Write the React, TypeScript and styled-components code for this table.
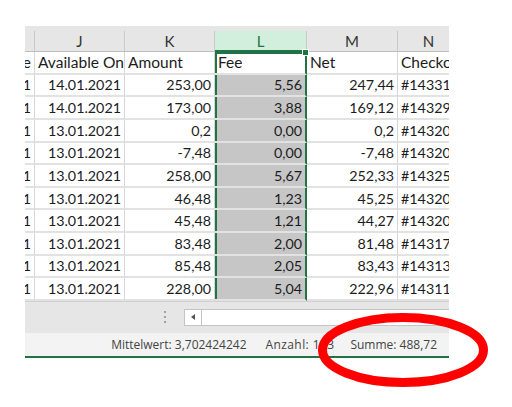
import React from "react";
import styled, { createGlobalStyle, css } from "styled-components";

const GlobalStyle = createGlobalStyle`
  html, body { margin: 0; padding: 0; background: #ffffff; }
  body { font-family: Lato, "Liberation Sans", sans-serif; }
`;

const COLS = "10px 90px 90px 92px 91px 62px";
const GREEN = "#217346";

const Page = styled.div`
  position: relative;
  width: 512px;
  height: 407px;
  padding: 26px 0 0 25px;
  box-sizing: border-box;
  overflow: hidden;
`;

const Sheet = styled.div`
  width: 424px;
  overflow: hidden;
`;

const HeaderRow = styled.div`
  display: grid;
  grid-template-columns: ${COLS};
  background: #e6e6e6;
  padding-top: 5px;
`;

const HeaderCell = styled.div<{ $active?: boolean }>`
  height: 21px;
  box-sizing: border-box;
  border-right: 1px solid #cacaca;
  border-bottom: 1px solid #bdbdbd;
  display: flex;
  align-items: center;
  justify-content: center;
  font-size: 15px;
  color: #333;
  overflow: hidden;
  ${(p) =>
    p.$active &&
    css`
      background: #d2efdd;
      color: ${GREEN};
      border-bottom: 2px solid ${GREEN};
    `}
`;

const Grid = styled.div`
  display: grid;
  grid-template-columns: ${COLS};
  grid-auto-rows: 22.64px;
  background: #fff;
`;

const Cell = styled.div<{ $right?: boolean; $sel?: boolean; $active?: boolean; $title?: boolean }>`
  position: relative;
  box-sizing: border-box;
  border-right: 1px solid #d6d6d6;
  border-bottom: 2px solid #e2e2e2;
  padding: 0 3px;
  display: flex;
  align-items: center;
  justify-content: ${(p) => (p.$right ? "flex-end" : "flex-start")};
  white-space: nowrap;
  overflow: hidden;
  font-size: ${(p) => (p.$title ? "15.5px" : "14.3px")};
  color: #1c1c1c;
  ${(p) =>
    p.$sel &&
    css`
      background: ${p.$active ? "#ffffff" : "#c6c6c6"};
      border-right-color: ${GREEN};
      border-right-width: 2px;
      box-shadow: inset 2px 0 0 ${GREEN} ${p.$active ? `, inset 0 2px 0 ${GREEN}` : ""};
      overflow: visible;
    `}
`;

const Clip = styled.span`
  display: block;
  overflow: hidden;
`;

const Handle = styled.span`
  position: absolute;
  right: -4px;
  top: -3px;
  width: 5px;
  height: 5px;
  background: ${GREEN};
  border: 1px solid #fff;
`;

const ScrollStrip = styled.div`
  height: 32px;
  box-sizing: border-box;
  background: #e6e6e6;
  border-top: 1px solid #d0d0d0;
  display: flex;
  align-items: center;
  padding-left: 139px;
`;

const Dots = styled.div`
  display: flex;
  flex-direction: column;
  gap: 3px;
`;

const Dot = styled.span`
  width: 2px;
  height: 2px;
  background: #a0a0a0;
`;

const ScrollBox = styled.div`
  margin-left: 18px;
  flex: 1;
  height: 17px;
  box-sizing: border-box;
  background: #fff;
  border: 1px solid #c4c4c4;
  border-right: none;
  display: flex;
`;

const ArrowBtn = styled.div`
  width: 16px;
  border-right: 1px solid #c4c4c4;
  display: flex;
  align-items: center;
  justify-content: center;
  &::before {
    content: "";
    border-style: solid;
    border-width: 3.5px 4px 3.5px 0;
    border-color: transparent #555 transparent transparent;
  }
`;

const StatusBar = styled.div`
  height: 25px;
  box-sizing: border-box;
  background: #f3f3f3;
  border-bottom: 2px solid ${GREEN};
  display: flex;
  align-items: center;
  justify-content: flex-end;
  padding-right: 12px;
  font-family: "Open Sans", "Noto Sans", sans-serif;
  font-size: 12px;
  color: #444;
`;

const StatusItem = styled.span<{ $gap: number; $spread?: boolean }>`
  margin-left: ${(p) => p.$gap}px;
  white-space: nowrap;
  letter-spacing: ${(p) => (p.$spread ? "0.4px" : "0")};
`;

const Mark = styled.svg`
  position: absolute;
  left: 0;
  top: 0;
  pointer-events: none;
`;

const letters = ["", "J", "K", "L", "M", "N"];
const titles = ["Date", "Available On", "Amount", "Fee", "Net", "Checkout"];
const rows = [
  ["14.01.2021", "253,00", "5,56", "247,44", "#143312"],
  ["14.01.2021", "173,00", "3,88", "169,12", "#143297"],
  ["13.01.2021", "0,2", "0,00", "0,2", "#143205"],
  ["13.01.2021", "-7,48", "0,00", "-7,48", "#143204"],
  ["13.01.2021", "258,00", "5,67", "252,33", "#143258"],
  ["13.01.2021", "46,48", "1,23", "45,25", "#143203"],
  ["13.01.2021", "45,48", "1,21", "44,27", "#143202"],
  ["13.01.2021", "83,48", "2,00", "81,48", "#143174"],
  ["13.01.2021", "85,48", "2,05", "83,43", "#143139"],
  ["13.01.2021", "228,00", "5,04", "222,96", "#143116"],
];

export default function App() {
  return (
    <>
      <GlobalStyle />
      <Page>
        <Sheet>
          <HeaderRow>
            {letters.map((l, i) => (
              <HeaderCell key={i} $active={l === "L"}>
                {l}
              </HeaderCell>
            ))}
          </HeaderRow>
          <Grid>
            {titles.map((t, i) => (
              <Cell key={t} $title $right={i === 0} $sel={i === 3} $active={i === 3}>
                {i === 3 ? <Clip>{t}</Clip> : t}
                {i === 3 && <Handle />}
              </Cell>
            ))}
            {rows.map((r, ri) => (
              <React.Fragment key={ri}>
                <Cell $right>{r[0]}</Cell>
                <Cell $right>{r[0]}</Cell>
                <Cell $right>{r[1]}</Cell>
                <Cell $right $sel>
                  {r[2]}
                </Cell>
                <Cell $right>{r[3]}</Cell>
                <Cell>{r[4]}</Cell>
              </React.Fragment>
            ))}
          </Grid>
          <ScrollStrip>
            <Dots>
              <Dot />
              <Dot />
              <Dot />
            </Dots>
            <ScrollBox>
              <ArrowBtn />
            </ScrollBox>
          </ScrollStrip>
          <StatusBar>
            <StatusItem $gap={0}>Mittelwert: 3,702424242</StatusItem>
            <StatusItem $gap={19} $spread>
              Anzahl: 133
            </StatusItem>
            <StatusItem $gap={16}>Summe: 488,72</StatusItem>
          </StatusBar>
        </Sheet>
        <Mark width={512} height={407} viewBox="0 0 512 407">
          <ellipse cx={403} cy={350} rx={80.5} ry={32.5} fill="none" stroke="#ff0000" strokeWidth={9} />
        </Mark>
      </Page>
    </>
  );
}
